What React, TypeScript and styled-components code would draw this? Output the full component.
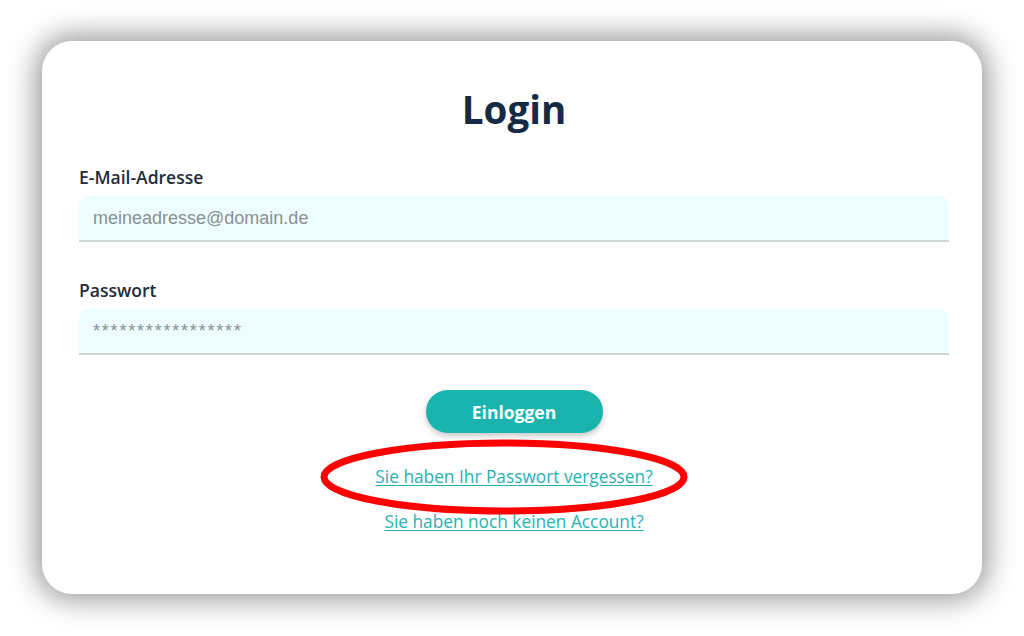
import styled, { createGlobalStyle } from "styled-components";

const GlobalStyle = createGlobalStyle`
  html, body {
    margin: 0;
    padding: 0;
    background: #ffffff;
  }
  body {
    font-family: "Open Sans", "Noto Sans", sans-serif;
  }
`;

export default function App() {
  return (
    <>
      <GlobalStyle />
      <SPage>
        <SCard>
          <STitle>Login</STitle>
          <SField>
            <SLabel>E-Mail-Adresse</SLabel>
            <SInput type="email" placeholder="meineadresse@domain.de" />
          </SField>
          <SField>
            <SLabel>Passwort</SLabel>
            <SInput type="text" placeholder="*****************" $spaced />
          </SField>
          <SActions>
            <SButton>Einloggen</SButton>
            <SHighlight>
              <SLink href="#">Sie haben Ihr Passwort vergessen?</SLink>
              {/* red marker drawn over the link */}
              <SRing viewBox="0 0 374 82" aria-hidden>
                <ellipse
                  cx="187"
                  cy="41"
                  rx="180"
                  ry="34"
                  fill="none"
                  stroke="#ff0000"
                  strokeWidth="7"
                />
              </SRing>
            </SHighlight>
            <SLink href="#">Sie haben noch keinen Account?</SLink>
          </SActions>
        </SCard>
      </SPage>
    </>
  );
}

const SPage = styled.div`
  width: 1024px;
  height: 636px;
  padding: 41px 42px 0;
  box-sizing: border-box;
  background: #ffffff;
  overflow: hidden;
`;

const SCard = styled.div`
  width: 940px;
  height: 553px;
  box-sizing: border-box;
  padding: 45px 33px 0 37px;
  background: #ffffff;
  border-radius: 30px;
  box-shadow: 0 0 28px 6px rgba(0, 0, 0, 0.4);
  display: flex;
  flex-direction: column;
`;

const STitle = styled.h1`
  margin: 0 0 35px;
  text-align: center;
  font-size: 38.5px;
  line-height: 46px;
  font-weight: 700;
  color: #142a45;
`;

const SField = styled.div`
  display: flex;
  flex-direction: column;
  margin-bottom: 38px;
`;

const SLabel = styled.label`
  font-size: 17.5px;
  line-height: 20px;
  font-weight: 600;
  color: #1f2c3c;
  margin-bottom: 9px;
`;

const SInput = styled.input<{ $spaced?: boolean }>`
  height: 46px;
  box-sizing: border-box;
  border: none;
  border-bottom: 2px solid #cfd6d6;
  border-radius: 9px 9px 0 0;
  background: #eefefe;
  padding: 0 14px;
  font-family: "Liberation Sans", Arial, sans-serif;
  font-size: 18px;
  letter-spacing: ${(props) => (props.$spaced ? "1.8px" : "0")};
  color: #333;
  outline: none;

  &::placeholder {
    color: #8a8f94;
  }
`;

const SActions = styled.div`
  display: flex;
  flex-direction: column;
  align-items: center;
  margin-top: -3px;
`;

const SButton = styled.button`
  width: 177px;
  height: 43px;
  border: none;
  border-radius: 22px;
  background: #1ab4af;
  color: #ffffff;
  font-family: "Open Sans", "Noto Sans", sans-serif;
  font-size: 17.5px;
  font-weight: 700;
  box-shadow: 0 3px 6px rgba(0, 0, 0, 0.22);
  margin-bottom: 34px;
  cursor: pointer;
`;

const SHighlight = styled.div`
  position: relative;
  margin-bottom: 25px;
`;

const SRing = styled.svg`
  position: absolute;
  left: calc(50% - 197px);
  top: -31px;
  width: 374px;
  height: 82px;
  pointer-events: none;
`;

const SLink = styled.a`
  display: block;
  font-size: 17.3px;
  line-height: 20px;
  color: #27b2b2;
  text-decoration: underline;
  text-underline-offset: 2px;
`;
